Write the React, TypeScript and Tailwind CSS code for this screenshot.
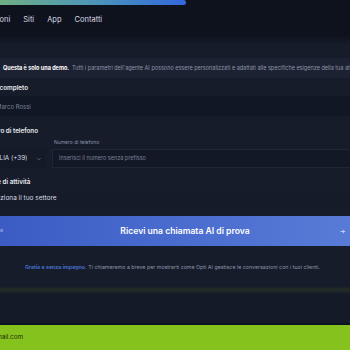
import React from "react";

export default function App() {
  return (
    <div
      className="relative w-[350px] h-[350px] overflow-hidden bg-[#0e121d] text-white"
      style={{ fontFamily: "Inter, 'Noto Sans', sans-serif" }}
    >
      {/* top progress bar */}
      <div className="h-[5px] w-full bg-[#0e121d]">
        <div className="h-full w-[186px] rounded-r-full bg-gradient-to-r from-[#6fae84] via-[#4d95b8] to-[#3566dc]" />
      </div>

      {/* nav */}
      <nav className="h-[30px] flex items-center gap-[13px] ml-[-22px] text-[7.5px] text-[#d8dce6] whitespace-nowrap">
        <span>Soluzioni</span>
        <span>Siti</span>
        <span>App</span>
        <span>Contatti</span>
      </nav>

      <div className="h-[9px] bg-gradient-to-b from-[#0e121d] to-[#151b29]" />

      {/* card */}
      <div className="bg-[#161c2a] h-[279px] flex flex-col">
        <div className="h-[14px]" />
        {/* demo banner */}
        <div className="h-[20px] ml-[-20px] mr-[-40px] bg-[#1c2232] flex items-center gap-[3px] text-[5.5px] whitespace-nowrap">
          <span className="w-[20px] text-right text-[#cbd2e0]">i.</span>
          <span className="font-bold text-white">Questa è solo una demo.</span>
          <span className="text-[#8d95a8]">
            Tutti i parametri dell'agente AI possono essere personalizzati e adattati alle specifiche esigenze della tua attività.
          </span>
        </div>

        <div className="ml-[-19px] w-[400px] flex flex-col">
          {/* Nome completo */}
          <div className="mt-[6px] h-[10px] text-[6.3px] font-semibold text-[#e6e9f0] whitespace-nowrap ml-[-1px]">
            Nome completo
          </div>
          <div className="mt-[2px] h-[20px] bg-[#121725] flex items-center pl-[15px] text-[6px] text-[#7a8296]">
            Marco Rossi
          </div>

          {/* Numero di telefono */}
          <div className="mt-[11px] h-[10px] text-[6.3px] font-semibold text-[#e6e9f0] whitespace-nowrap ml-[-1px]">
            Numero di telefono
          </div>
          <div className="mt-[1px] flex gap-[6px]">
            <div className="w-[65px] flex flex-col">
              <div className="h-[10px] text-[5px] text-[#8a92a6] pl-[2px] pt-[1px]">Paese</div>
              <div className="h-[19px] mt-[1px] bg-[#141a28] flex items-center justify-between pl-[9px] pr-[4px] text-[6.3px] text-[#d8dce6]">
                <span>ITALIA (+39)</span>
                <svg width="6" height="6" viewBox="0 0 24 24" fill="none" stroke="#8a92a6" strokeWidth="2.5">
                  <path d="M6 9l6 6 6-6" />
                </svg>
              </div>
            </div>
            <div className="flex-1 flex flex-col">
              <div className="h-[10px] text-[5px] text-[#8a92a6] pl-[2px] pt-[1px]">Numero di telefono</div>
              <div className="h-[19px] mt-[1px] bg-[#131826] border border-[#1f2637] flex items-center pl-[6px] text-[5.5px] text-[#7a8296]">
                Inserisci il numero senza prefisso
              </div>
            </div>
          </div>

          {/* Settore */}
          <div className="mt-[10px] h-[10px] text-[6.3px] font-semibold text-[#e6e9f0] whitespace-nowrap ml-[-2px]">
            Settore di attività
          </div>
          <div className="mt-[2px] h-[18px] bg-[#151b29] flex items-center pl-[6px] text-[6.5px] text-[#d8dce6]">
            Seleziona il tuo settore
          </div>

          {/* button */}
          <div className="mt-[8px] h-[30px] relative bg-gradient-to-r from-[#3a5ac2] via-[#4a6ccf] to-[#5b7ed8] flex items-center justify-center text-[8.6px] font-semibold text-white pl-[8px]">
            <span className="absolute left-[19px] text-[5px] text-[#aebde8]">o</span>
            <span>Ricevi una chiamata AI di prova</span>
            <svg className="absolute left-[358px]" width="7" height="7" viewBox="0 0 24 24" fill="none" stroke="#e6ecff" strokeWidth="2.5">
              <path d="M5 12h14M13 6l6 6-6 6" />
            </svg>
          </div>

          <div className="mt-[18px] text-[5.3px] text-[#8d95a8] whitespace-nowrap pl-[44px]">
            <span className="font-semibold text-[#4c74d8]">Gratis e senza impegno.</span>{" "}
            Ti chiameremo a breve per mostrarti come Opti AI gestisce le conversazioni con i tuoi clienti.
          </div>
        </div>

        <div className="mt-[14px] h-[8px] bg-gradient-to-b from-[#161c2a] via-[#252d25] to-[#141a28]" />
        <div className="flex-1 bg-[#141a27]" />
      </div>

      {/* green footer */}
      <div className="h-[2px] bg-[#0d1220]" />
      <div className="h-[25px] bg-[#85c21e] flex items-center text-[6.3px] text-[#1d2a0a] ml-[-38px] whitespace-nowrap">
        info@opti.gmail.com
      </div>
    </div>
  );
}
